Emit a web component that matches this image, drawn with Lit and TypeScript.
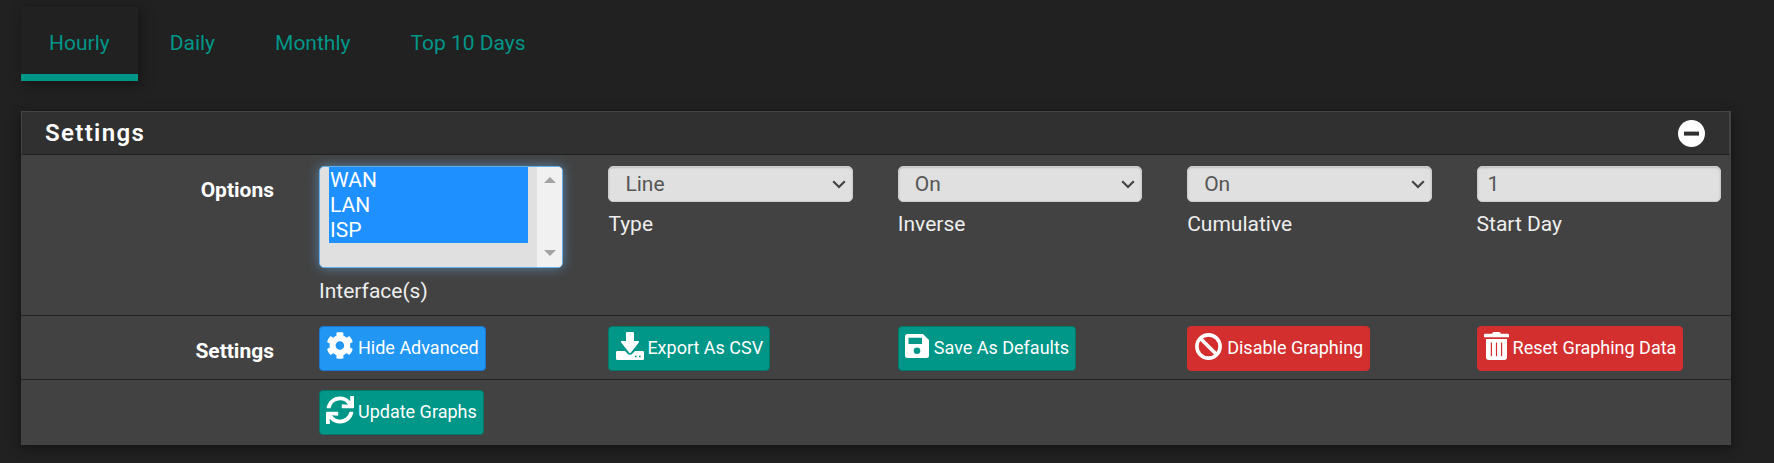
import { LitElement, html, css, svg } from "lit";
import { customElement, property } from "lit/decorators.js";

const icons: Record<string, { w: number; h: number; vb: string; top: number; left: number; gap: number; body: unknown }> = {
  gear: { w: 27, h: 27, vb: "0 5 497 502", top: 5, left: 0, gap: 5, body: svg`<path d="M487.4 315.7l-42.6-24.6c4.3-23.2 4.3-47 0-70.2l42.6-24.6c4.9-2.8 7.1-8.6 5.5-14-11.1-35.6-30-67.8-54.7-94.6-3.8-4.1-10-5.1-14.8-2.3L380.8 110c-17.9-15.4-38.5-27.3-60.8-35.1V25.8c0-5.6-3.9-10.5-9.4-11.7-36.7-8.2-74.3-7.8-109.2 0-5.5 1.2-9.4 6.1-9.4 11.7V75c-22.2 7.9-42.8 19.8-60.8 35.1L88.7 85.5c-4.9-2.8-11-1.9-14.8 2.3-24.7 26.7-43.6 58.9-54.7 94.6-1.7 5.4.6 11.2 5.5 14L67.3 221c-4.3 23.2-4.3 47 0 70.2l-42.6 24.6c-4.9 2.8-7.1 8.6-5.5 14 11.1 35.6 30 67.8 54.7 94.6 3.8 4.1 10 5.1 14.8 2.3l42.6-24.6c17.9 15.4 38.5 27.3 60.8 35.1v49.2c0 5.6 3.9 10.5 9.4 11.7 36.7 8.2 74.3 7.8 109.2 0 5.5-1.2 9.4-6.1 9.4-11.7v-49.2c22.2-7.9 42.8-19.8 60.8-35.1l42.6 24.6c4.9 2.8 11 1.9 14.8-2.3 24.7-26.7 43.6-58.9 54.7-94.6 1.5-5.5-.7-11.3-5.6-14.1zM256 336c-44.1 0-80-35.9-80-80s35.9-80 80-80 80 35.9 80 80-35.9 80-80 80z"/>` },
  download: { w: 28, h: 28, vb: "0 0 28 28", top: 5, left: 1, gap: 3, body: svg`<path fill-rule="evenodd" d="M11 0H17Q18 0 18 1V9H22.2Q23.8 9.2 22.8 10.6L15 20.4Q14 21.4 13 20.4L5.2 10.6Q4.2 9.2 5.8 9H10V1Q10 0 11 0ZM1.3 19H9L11.4 21.6Q14 24 16.6 21.6L19 19H26.7Q28 19 28 20.3V26.5Q28 28 26.7 28H1.3Q0 28 0 26.5V20.3Q0 19 1.3 19ZM19 23.7V25.2H20.7V23.7ZM23 23.7V25.2H24.7V23.7Z"/>` },
  save: { w: 24, h: 24, vb: "0 0 24 24", top: 7, left: 0, gap: 5, body: svg`<path fill-rule="evenodd" d="M2.5 0H18L24 6V21.5Q24 24 21.5 24H2.5Q0 24 0 21.5V2.5Q0 0 2.5 0ZM3.5 3.7V10H17V3.7ZM12 13.5A3.3 3.3 0 1 0 12 20.1A3.3 3.3 0 1 0 12 13.5Z"/>` },
  ban: { w: 27, h: 27, vb: "0 0 27 27", top: 6, left: 1, gap: 5, body: svg`<g fill="none" stroke="currentColor" stroke-width="3.6"><circle cx="13.5" cy="13.5" r="11.6"/><path d="M5.5 5.5L21.5 21.5"/></g>` },
  trash: { w: 25, h: 28, vb: "0 0 25 28", top: 5, left: 0, gap: 4, body: svg`<path fill-rule="evenodd" d="M1 1.8H8L8.8 .5Q9 0 9.8 0H15.2Q16 0 16.2 .5L17 1.8H24Q25 1.8 25 2.8V5.3H0V2.8Q0 1.8 1 1.8ZM2 7H23V25.3Q23 28 20.3 28H4.7Q2 28 2 25.3ZM6.8 10.5V24.3H8V10.5ZM11.9 10.5V24.3H13.1V10.5ZM17 10.5V24.3H18.2V10.5Z"/>` },
  refresh: { w: 28, h: 28, vb: "0 0 512 512", top: 5, left: 0, gap: 4, body: svg`<path d="M440.65 12.57l4 82.77A247.16 247.16 0 0 0 255.83 8C134.73 8 33.91 94.92 12.29 209.82A12 12 0 0 0 24.09 224h49.05a12 12 0 0 0 11.67-9.26 175.91 175.91 0 0 1 317-56.94l-101.46-4.86a12 12 0 0 0-12.57 12v47.41a12 12 0 0 0 12 12H500a12 12 0 0 0 12-12V12a12 12 0 0 0-12-12h-47.37a12 12 0 0 0-11.98 12.57zM255.83 432a175.61 175.61 0 0 1-146-77.8l101.8 4.87a12 12 0 0 0 12.57-12v-47.4a12 12 0 0 0-12-12H12a12 12 0 0 0-12 12V500a12 12 0 0 0 12 12h47.35a12 12 0 0 0 12-12.6l-4.15-82.57A247.17 247.17 0 0 0 255.83 504c121.11 0 221.93-86.92 243.55-201.82a12 12 0 0 0-11.8-14.18h-49.05a12 12 0 0 0-11.67 9.26A175.86 175.86 0 0 1 255.83 432z"/>` },
};

@customElement("icon-button")
class IconButton extends LitElement {
  @property() icon = "gear";
  @property() label = "";
  @property() tone = "teal";
  static styles = css`
    :host { display: block; }
    .btn { display: inline-flex; align-items: flex-start; box-sizing: border-box; height: 45px; padding: 0 6px 0 6px;
      border: 1px solid #00796b; border-radius: 4px; background: #009688; color: #fff;
      font: 18px/26px Roboto, sans-serif; white-space: nowrap; }
    .blue { background: #2196f3; border-color: #1976d2; }
    .red { background: #d32f2f; border-color: #d32f2f; }
    svg { display: block; flex: none; fill: currentColor; }
    .text { margin-top: 8px; }
  `;
  render() {
    const i = icons[this.icon];
    return html`<span class="btn ${this.tone}"><svg width=${i.w} height=${i.h} viewBox=${i.vb} style="margin:${i.top}px ${i.gap}px 0 ${i.left}px">${i.body}</svg><span class="text">${this.label}</span></span>`;
  }
}

@customElement("app-root")
class AppRoot extends LitElement {
  static styles = css`
    :host { display: block; box-sizing: border-box; height: 463px; overflow: hidden; padding: 7px 43px 0 21px;
      background: #212121; color: #eee; font: 21px/30px Roboto, sans-serif; }
    .tabs { display: flex; gap: 4px; height: 74px; }
    .tab { box-sizing: border-box; padding: 21px 28px 0; color: #009688; border-bottom: 7px solid transparent; }
    .active { border-bottom-color: #009688; box-shadow: 3px 3px 12px rgba(0,0,0,.4); }
    .panel { margin-top: 30px; height: 334px; background: #424242; box-shadow: 0 3px 12px rgba(0,0,0,.45); }
    .head { display: flex; justify-content: space-between; box-sizing: border-box; height: 44px;
      padding: 0 24px 0 23px; background: #303030; border: 1px solid #444; border-right-width: 2px; border-bottom-color: #212121;
      color: #fff; font-size: 24px; font-weight: 600; letter-spacing: 1.35px; line-height: 42px; }
    .head svg { margin-top: 8px; }
    .row { display: grid; grid-template-columns: 253px repeat(5, 244.4px); column-gap: 45px; box-sizing: border-box; }
    .row + .row { border-top: 1px solid #212121; }
    .options { height: 160px; padding-top: 11px; }
    .actions { height: 64px; padding-top: 10px; }
    .label { text-align: right; font-weight: 700; color: #fff; }
    .options .label { padding-top: 9px; }
    .actions .label { padding-top: 10px; }
    .field { box-sizing: border-box; height: 36px; border: 1px solid #ccc; border-radius: 5px; background: #e0e0e0; color: #555;
      padding: 0 6px 0 16px; line-height: 34px; display: flex; justify-content: space-between; align-items: flex-start;
      box-shadow: inset 0 1px 2px rgba(0,0,0,.15); }
    .field svg { margin-top: 12px; }
    .field.plain { padding-left: 10px; }
    .help { margin-top: 7px; }
    .glow + .help { margin-top: 8px; }
    .list { display: flex; box-sizing: border-box; height: 102px; border: 1px solid #66afe9; border-radius: 5px; overflow: hidden;
      background: #e0e0e0; color: #fff; padding-left: 9px; }
    .glow { border-radius: 5px; box-shadow: 0 0 12px rgba(102,175,233,.6); }
    .items { flex: 1; align-self: flex-start; margin-right: 9px; padding: 1px 0 0 1px; line-height: 25px; background: #1e90ff; }
    .bar { width: 25px; background: #f1f1f1; display: flex; flex-direction: column; justify-content: space-between; align-items: center;
      padding: 10px 0 11px; box-sizing: border-box; }
  `;
  select(value: string, help: string) {
    return html`<div><div class="field"><span>${value}</span><svg width="14" height="12" viewBox="0 0 14 12"><path d="M1.2 2.2L7 8L12.8 2.2" fill="none" stroke="#444" stroke-width="2.2"/></svg></div><div class="help">${help}</div></div>`;
  }
  render() {
    return html`
      <nav class="tabs">
        ${["Hourly", "Daily", "Monthly", "Top 10 Days"].map((t, i) => html`<div class="tab ${i ? "" : "active"}">${t}</div>`)}
      </nav>
      <section class="panel">
        <header class="head"><span>Settings</span><svg width="27" height="27" viewBox="0 0 27 27"><circle cx="13.5" cy="13.5" r="13.5" fill="#fff"/><rect x="6" y="11.6" width="15" height="4" fill="#303030"/></svg></header>
        <div class="row options">
          <div class="label">Options</div>
          <div><div class="glow"><div class="list">
            <div class="items">${["WAN", "LAN", "ISP"].map((t) => html`<div>${t}</div>`)}</div>
            <div class="bar"><svg width="12" height="6"><path d="M6 0L12 6H0Z" fill="#a3a3a3"/></svg><svg width="12" height="6"><path d="M0 0H12L6 6Z" fill="#a3a3a3"/></svg></div>
          </div></div><div class="help">Interface(s)</div></div>
          ${this.select("Line", "Type")}${this.select("On", "Inverse")}${this.select("On", "Cumulative")}
          <div><div class="field plain"><span>1</span></div><div class="help">Start Day</div></div>
        </div>
        <div class="row actions">
          <div class="label">Settings</div>
          <icon-button icon="gear" label="Hide Advanced" tone="blue"></icon-button>
          <icon-button icon="download" label="Export As CSV"></icon-button>
          <icon-button icon="save" label="Save As Defaults"></icon-button>
          <icon-button icon="ban" label="Disable Graphing" tone="red"></icon-button>
          <icon-button icon="trash" label="Reset Graphing Data" tone="red"></icon-button>
        </div>
        <div class="row actions">
          <div></div>
          <icon-button icon="refresh" label="Update Graphs"></icon-button>
        </div>
      </section>`;
  }
}
